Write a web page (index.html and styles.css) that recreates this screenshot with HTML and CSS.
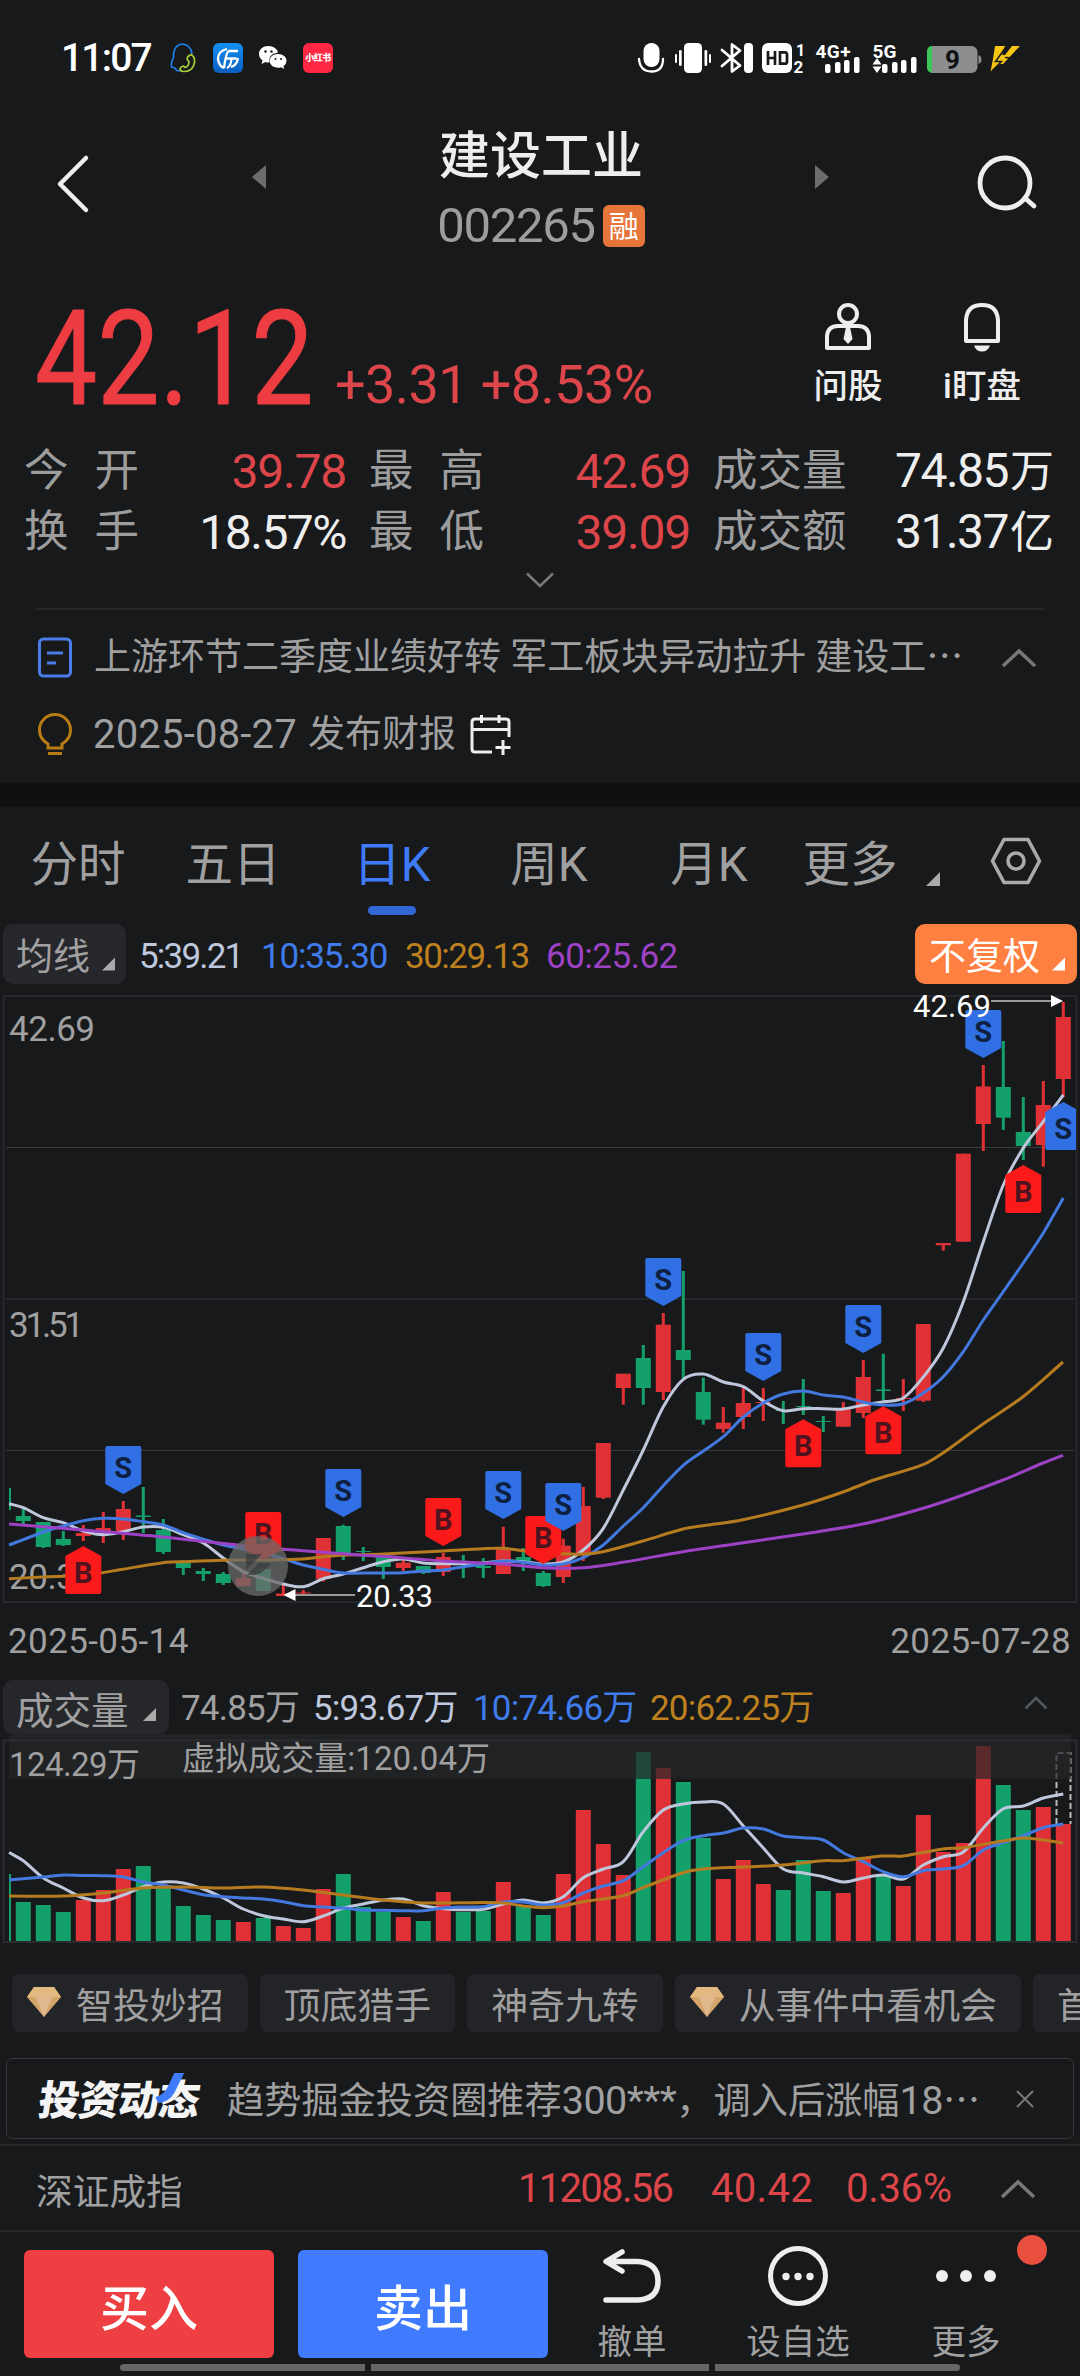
FILE: index.html
```html
<!DOCTYPE html>
<html lang="zh-CN">
<head>
<meta charset="utf-8">
<title>建设工业 002265</title>
<link rel="stylesheet" href="styles.css">
</head>
<body>
<div class="statusbar">
  <span class="clock">11:07</span>
  <svg class="st-qq" width="26" height="30" viewBox="0 0 26 30" fill="none" stroke-width="1.7" stroke-linejoin="round"><path d="M10 28Q6 28 5 25L1.5 24Q1 18 3.500 15Q3 2 12.500 1Q21 2 22 11" stroke="#1d7fe8"/><path d="M21 11.500q5 3 3 10t-10 7q-4 0-4-3q3-4 5-1q4-1 4-6q-3-2-1-5z" stroke="#a7cf35"/></svg>
  <svg class="st-fin" width="30" height="30" viewBox="0 0 30 30"><defs><linearGradient id="finBlue" x2="0" y2="1"><stop stop-color="#1390f5"/><stop offset="1" stop-color="#0a5fc0"/></linearGradient></defs><rect width="30" height="30" rx="6" fill="url(#finBlue)"/><path d="M14 6Q5 8 5 16Q6 23 11 25M11 25Q13 9 16 8H25M13 15.500H23.500M14 25Q18 23 18.500 16M18 24Q24 22 25 15" fill="none" stroke="#fff" stroke-width="2.3"/></svg>
  <svg class="st-wx" width="28" height="25" viewBox="0 0 28 25"><path d="M9.500 0C4 0 0 3.500 0 8q0 4 3.500 6.200L2.500 18l4-2q2 .6 4 .5Q9 8 19 6.500Q17 0 9.500 0z" fill="#fff"/><path d="M19 8c-5 0-8.300 3-8.300 6.800S14 21.700 19 21.700q1.500 0 3-.5l3.200 1.900-.8-2.900Q27.600 18 27.600 14.800C27.600 11 24 8 19 8z" fill="#fff"/><g fill="#17191b"><circle cx="6.500" cy="5.500" r="1.200"/><circle cx="12.500" cy="5.500" r="1.200"/><circle cx="16.500" cy="13" r="1"/><circle cx="22" cy="13" r="1"/></g></svg>
  <span class="st-red">小红书</span>
  <span class="grow"></span>
  <svg class="st-right" width="388" height="34" viewBox="636 41 388 34">
    <g fill="#fff"><rect x="643.500" y="43" width="16" height="24" rx="8"/><path d="M639 59q1 12.500 12.500 12.500T663 59" fill="none" stroke="#fff" stroke-width="2.300" stroke-linecap="round"/>
    <rect x="684" y="43" width="18" height="30" rx="4.500"/><rect x="679" y="50" width="2.700" height="16" rx="1.300"/><rect x="675" y="54" width="2" height="9" rx="1"/><rect x="704.500" y="50" width="2.700" height="16" rx="1.300"/><rect x="709" y="54" width="2" height="9" rx="1"/>
    <path d="M722 50L740 65.500L732 71.500V44.500L740 50.500L722 66" fill="none" stroke="#fff" stroke-width="2.800" stroke-linejoin="round" stroke-linecap="round"/><rect x="744" y="43" width="9" height="30" rx="4"/>
    <rect x="762" y="43" width="30" height="30" rx="6"/></g>
    <path d="M768 51v14M768 58h7M775 51v14M780 52.300h5q2 0 2 2v7.400q0 2-2 2h-5z" fill="none" stroke="#17191b" stroke-width="2.700"/>
    <g fill="#fff" class="st-text"><text x="796" y="56" font-size="16">1</text><text x="793.500" y="73" font-size="17">2</text><text x="815.500" y="57.500" font-size="19" textLength="35">4G+</text><text x="872.500" y="57.500" font-size="19" textLength="24">5G</text>
    <rect x="825" y="64" width="5.500" height="9" rx="2"/><rect x="835" y="62" width="5.500" height="11" rx="2"/><rect x="844" y="60" width="5.500" height="13" rx="2"/><rect x="854" y="57" width="5.500" height="16" rx="2"/>
    <rect x="882" y="64" width="5.500" height="9" rx="2"/><rect x="892" y="62" width="5.500" height="11" rx="2"/><rect x="901" y="60" width="5.500" height="13" rx="2"/><rect x="911" y="57" width="5.500" height="16" rx="2"/>
    <path d="M872.500 64.500l4.500-6.500 4.500 6.500zM872.500 66.500l4.500 6.500 4.500-6.500z"/></g>
    <rect x="927" y="46" width="50.500" height="27" rx="6" fill="#8c8d8f"/><path d="M978.500 55q3 1 3 4.500t-3 4.500z" fill="#8c8d8f"/><path d="M932 46h-1q-4 1-4 6v15q0 5 5 6z" fill="#3dc658"/><text x="945" y="69" font-size="26" class="st-text" fill="#111">9</text>
    <path d="M995 46h10l-3 9h3l7-9h8L1003 64h-3L990.500 71.500L993 59z" fill="#f7c613"/><path d="M1006 47L995.500 61.500h6L992 71M1014 58l-9-.5" stroke="#17191b" stroke-width="1.500" fill="none"/>
  </svg>
</div>

<header class="header">
  <svg class="back" width="40" height="62" viewBox="0 0 40 62"><path d="M34 5L8 31L34 57" fill="none" stroke="#eee" stroke-width="4.500" stroke-linecap="round" stroke-linejoin="round"/></svg>
  <svg class="prev" width="14" height="24" viewBox="0 0 14 24"><path d="M14 0v24L0 12z" fill="#6c6c6d"/></svg>
  <div class="title"><h1>建设工业</h1><div class="code"><span>002265</span><b>融</b></div></div>
  <svg class="next" width="14" height="24" viewBox="0 0 14 24"><path d="M0 0v24l14-12z" fill="#6c6c6d"/></svg>
  <svg class="search" width="64" height="60" viewBox="0 0 64 60" fill="none" stroke="#eee" stroke-width="4.800" stroke-linecap="round"><circle cx="30" cy="29" r="25"/><path d="M50 44l9 8"/></svg>
</header>

<section class="quote">
  <div class="price-row">
    <span class="price">42.12</span>
    <span class="change">+3.31 +8.53%</span>
    <div class="tool ask"><svg width="48" height="50" viewBox="0 0 48 50" fill="none" stroke="#eee" stroke-width="4"><circle cx="24" cy="12" r="9"/><path d="M3 46V34Q4 24 14 24H34Q44 24 45 34V46Z" stroke-linejoin="round"/><path d="M22 25h4l2.500 12-4.500 5-4.500-5z" fill="#eee" stroke="none"/></svg><span>问股</span></div>
    <div class="tool watch"><svg width="40" height="50" viewBox="0 0 40 50"><path d="M4 39V18Q5 3 20 3Q35 3 36 18V39Z" fill="none" stroke="#eee" stroke-width="4" stroke-linejoin="round"/><path d="M12 43.500h16q-2 6-8 6t-8-6z" fill="#eee"/></svg><span>i盯盘</span></div>
  </div>
  <dl class="stats">
    <dt class="wide">今开</dt><dd class="up">39.78</dd><dt class="wide next-col">最高</dt><dd class="up">42.69</dd><dt class="next-col">成交量</dt><dd>74.85<i>万</i></dd>
    <dt class="wide">换手</dt><dd>18.57%</dd><dt class="wide next-col">最低</dt><dd class="up">39.09</dd><dt class="next-col">成交额</dt><dd>31.37<i>亿</i></dd>
  </dl>
  <svg class="expand" width="30" height="18" viewBox="0 0 30 18"><path d="M2 2.500l13 12.500 13-12.500" fill="none" stroke="#77787a" stroke-width="2.500"/></svg>
</section>

<section class="news">
  <div class="news-row">
    <svg width="34" height="42" viewBox="0 0 34 42" fill="none" stroke="#4a7de8" stroke-width="3"><rect x="1.500" y="2" width="31" height="37" rx="4"/><path d="M9 16h16M9 26h9"/></svg>
    <span class="headline">上游环节二季度业绩好转 军工板块异动拉升 建设工<i class="dots">…</i></span>
    <svg class="fold" width="36" height="20" viewBox="0 0 36 20"><path d="M2 18L18 3L34 18" fill="none" stroke="#77787a" stroke-width="3.500"/></svg>
  </div>
  <div class="news-row second">
    <svg width="34" height="44" viewBox="0 0 34 44" fill="none" stroke="#b97c12" stroke-width="3"><path d="M10 35V31Q1.500 26 1.500 17A15.500 15.500 0 0 1 32.500 17Q32.500 26 24 31V35ZM10 40.500h14"/></svg>
    <span class="date">2025-08-27</span><span class="event">发布财报</span>
    <svg class="cal" width="42" height="42" viewBox="0 0 42 42" fill="none" stroke="#eee" stroke-width="3"><path d="M22 38H5Q2 38 2 35V8Q2 5 5 5H36Q39 5 39 8V23M2 15.500H39M11.500 1v8M29 1v8M33 26v15M25.500 33.500h15"/></svg>
  </div>
</section>

<nav class="tabs">
  <span>分时</span><span>五日</span><span class="active">日K</span><span>周K</span><span>月K</span><span>更多</span>
  <svg class="corner" width="14" height="14" viewBox="0 0 14 14"><path d="M14 0v14H0z" fill="#aaa"/></svg>
  <svg class="hex" width="52" height="48" viewBox="0 0 52 48" fill="none" stroke="#aaa" stroke-width="3.600" stroke-linejoin="round"><path d="M14 2.500H38L49.500 24L38 45.500H14L2.500 24Z"/><circle cx="26" cy="24" r="8"/></svg>
</nav>

<div class="ma-row">
  <button class="chip">均线<svg width="13" height="14" viewBox="0 0 14 14"><path d="M14 0v14H0z" fill="#aaa"/></svg></button>
  <span class="m5">5:39.21</span><span class="m10">10:35.30</span><span class="m30">30:29.13</span><span class="m60">60:25.62</span>
  <button class="chip adjust">不复权<svg width="13" height="14" viewBox="0 0 14 14"><path d="M14 0v14H0z" fill="#fff"/></svg></button>
</div>

<svg id="kline" class="kline" width="1080" height="628" viewBox="0 984 1080 628"></svg>
<div class="dates"><span>2025-05-14</span><span>2025-07-28</span></div>

<div class="vol-head">
  <button class="chip">成交量<svg width="13" height="13" viewBox="0 0 14 14"><path d="M14 0v14H0z" fill="#aaa"/></svg></button>
  <span class="v0">74.85万</span><span class="v5">5:93.67万</span><span class="v10">10:74.66万</span><span class="v20">20:62.25万</span>
  <svg class="vfold" width="24" height="14" viewBox="0 0 24 14"><path d="M1.500 12.500L12 2L22.500 12.500" fill="none" stroke="#55585f" stroke-width="2.500"/></svg>
</div>
<svg id="volume" class="volume" width="1080" height="212" viewBox="0 1734 1080 212"></svg>

<div class="tags">
  <span class="tag gem"><svg width="34" height="30" viewBox="0 0 34 30"><path d="M7 0H27L34 10L17 30L0 10Z" fill="#d6a56c"/><path d="M7 0H27L34 10H0Z" fill="#e3b982"/><path d="M9 10h16L17 30z" fill="#dfb98d"/></svg>智投妙招</span>
  <span class="tag">顶底猎手</span><span class="tag">神奇九转</span>
  <span class="tag gem"><svg width="34" height="30" viewBox="0 0 34 30"><path d="M7 0H27L34 10L17 30L0 10Z" fill="#d6a56c"/><path d="M7 0H27L34 10H0Z" fill="#e3b982"/><path d="M9 10h16L17 30z" fill="#dfb98d"/></svg>从事件中看机会</span>
  <span class="tag">首板</span>
</div>

<div class="banner">
  <div class="brand">投资动态<svg width="30" height="48" viewBox="0 0 30 48"><path d="M29 0L19 20Q14 29 3 30L0 24Q9 22 13 13L19 0Z" fill="#3f7bfa"/></svg></div>
  <span class="promo">趋势掘金投资圈推荐<em>300***</em>，调入后涨幅<em>18</em><i class="dots">…</i></span>
  <svg class="close" width="18" height="18" viewBox="0 0 18 18"><path d="M1 1l16 16M17 1L1 17" stroke="#77787a" stroke-width="2"/></svg>
</div>

<div class="index">
  <span class="name">深证成指</span><span class="n1">11208.56</span><span class="n2">40.42</span><span class="n3">0.36%</span>
  <svg width="36" height="20" viewBox="0 0 36 20"><path d="M2 18L18 3L34 18" fill="none" stroke="#77787a" stroke-width="3.500"/></svg>
</div>

<footer class="actions">
  <button class="buy">买入</button><button class="sell">卖出</button>
  <div class="act a1"><svg width="62" height="60" viewBox="0 0 62 60" fill="none" stroke="#eee" stroke-width="5.500" stroke-linecap="round" stroke-linejoin="round"><path d="M21 6L5 15.500L21 25M6 15.500H37Q57 17 57 35T37 54H5"/></svg><span>撤单</span></div>
  <div class="act a2"><svg width="62" height="60" viewBox="0 0 62 60"><circle cx="31" cy="30" r="27.500" fill="none" stroke="#eee" stroke-width="5"/><g fill="#eee"><circle cx="19" cy="30.500" r="3.700"/><circle cx="31" cy="30.500" r="3.700"/><circle cx="43" cy="30.500" r="3.700"/></g></svg><span>设自选</span></div>
  <div class="act a3"><svg width="62" height="60" viewBox="0 0 62 60" fill="#eee"><circle cx="7" cy="30" r="6"/><circle cx="31" cy="30" r="6"/><circle cx="55" cy="30" r="6"/></svg><span>更多</span><i class="badge"></i></div>
  <div class="homebar"><i></i><i></i><i></i></div>
</footer>
<script src="chart.js"></script>
</body>
</html>
```
FILE: styles.css
```css
* { box-sizing: border-box; }
body { margin: 0; width: 1080px; height: 2376px; overflow: hidden; background: #17191b; color: #eee; font-family: Roboto, "Noto Sans CJK SC", sans-serif; }
h1, dl, dd, dt { margin: 0; font-weight: 400; }
button { border: 0; padding: 0; color: inherit; font: inherit; }
i, em { font-style: normal; }
svg { display: block; flex: none; }
span { white-space: nowrap; }
.grow { flex: 1; }

.statusbar { height: 116px; display: flex; align-items: center; padding: 0 56px 0 61px; }
.clock { width: 109px; font-size: 39px; font-weight: 500; letter-spacing: -1.8px; color: #fff; }
.st-fin { margin-left: 17px; }
.st-wx { margin-left: 16px; }
.st-red { margin-left: 16px; width: 30px; height: 30px; border-radius: 6px; background: #ff2741; color: #fff; font-size: 9px; font-weight: 900; line-height: 30px; text-align: center; letter-spacing: -.5px; }
.st-text { font-weight: 700; font-family: Roboto, sans-serif; }

.header { height: 150px; display: flex; align-items: flex-start; }
.back { margin: 37px 0 0 52px; }
.prev { margin: 49px 0 0 160px; }
.title { width: 300px; margin: 0 124px 0 125px; display: flex; flex-direction: column; align-items: center; }
.title h1 { height: 78px; line-height: 82px; font-size: 51px; font-weight: 500; }
.code { display: flex; align-items: center; gap: 8px; height: 66px; margin-top: -1px; }
.code span { font-size: 49px; letter-spacing: -1.3px; color: #9d9d9e; line-height: 66px; }
.code b { width: 42px; height: 42px; border-radius: 6px; background: #e6753c; color: #fff; font-size: 30px; line-height: 43px; text-align: center; font-weight: 400; }
.next { margin-top: 49px; }
.search { margin: 38px 0 0 146px; }

.quote { height: 342px; }
.price-row { height: 156px; display: flex; align-items: flex-start; padding-left: 35px; }
.price { width: 300px; height: 156px; font-size: 132px; line-height: 186px; color: #ed3d42; font-weight: 400; -webkit-text-stroke: 1px #ed3d42; transform: scaleX(.84); transform-origin: 0 0; letter-spacing: 0; }
.change { width: 460px; font-size: 54px; line-height: 60px; margin-top: 89px; color: #dc4549; letter-spacing: -.6px; }
.tool { display: flex; flex-direction: column; align-items: center; width: 100px; margin-top: 36px; font-size: 34.500px; font-weight: 500; line-height: 40px; }
.tool span { margin-top: 14px; }
.ask { margin-left: 3px; }
.watch { margin-left: 34px; }
.stats { display: grid; grid-template-columns: 138px 184px 159px 185px 160px 204px; padding: 19px 0 0 24px; grid-auto-rows: 61px; font-size: 44.500px; line-height: 61px; align-items: center; height: 141px; }
.stats dt { color: #9d9d9e; white-space: nowrap; }
.stats .next-col { padding-left: 23px; }
.wide { letter-spacing: 26px; }
.stats dd { text-align: right; font-size: 48px; letter-spacing: -1.500px; white-space: nowrap; }
.stats dd.up { letter-spacing: -1.200px; }
.stats dd i { font-size: 44px; letter-spacing: 0; margin-left: 2px; }
.up { color: #dc4549; }
.expand { margin: 8px 0 0 525px; }

.news { height: 199px; border-bottom: 24px solid #0f1011; padding: 10px 35px 0; color: #a0a0a1; font-size: 37px; }
.news::before { content: ""; display: block; height: 2px; margin-top: -10px; background: #242628; }
.news-row { display: flex; align-items: center; height: 78px; margin-top: 9px; padding-left: 3px; line-height: 50px; }
.news-row.second { margin-top: -1px; }
.headline { margin-left: 22px; width: 871px; }
.dots { font-family: "Noto Sans CJK SC", sans-serif; line-height: 1px; }
.fold { margin-left: 36px; }
.date { margin-left: 21px; font-size: 40px; width: 215px; letter-spacing: .2px; }
.cal { margin-left: 14px; }

.tabs { height: 117px; display: grid; grid-template-columns: 156px 154px 164px 150px 170px 112px 84px 1fr; font-size: 47.500px; line-height: 58px; padding-top: 29px; text-align: center; color: #a0a0a1; }
.active { color: #3f7bfa; }
.active::after { content: ""; display: block; width: 48px; height: 9px; margin: 12px auto 0; border-radius: 4.500px; background: #3069d6; }
.corner { margin: 36px 0 0 20px; }
.hex { margin-top: 1px; }

.chip { display: flex; align-items: center; height: 60px; border-radius: 10px; background: #26272b; color: #a0a0a1; font-size: 37px; }
.ma-row { height: 60px; display: flex; align-items: center; padding: 0 3px; font-size: 35px; letter-spacing: -.5px; }
.ma-row > span { padding-top: 4px; }
.ma-row .chip { width: 123px; padding-left: 13px; gap: 12px; letter-spacing: 0; }
.ma-row .chip svg { margin-top: 20px; }
.ma-row .adjust { width: 162px; margin-left: auto; padding-left: 14px; background: #ff8040; color: #fff; }
.m5 { width: 122px; margin-left: 13px; letter-spacing: -1.800px; color: #bfc7dc; }
.m10 { width: 144px; letter-spacing: -1.200px; color: #3f7bea; }
.m30 { width: 141px; letter-spacing: -1.500px; color: #bd801e; }
.m60 { color: #9d42c4; }

.dates { height: 58px; display: flex; justify-content: space-between; align-items: center; padding: 0 9px 0 8px; font-size: 35px; letter-spacing: .4px; color: #a0a0a1; }

.vol-head { height: 64px; display: flex; align-items: center; padding: 0 3px; font-size: 35px; }
.vol-head .chip { width: 166px; height: 54px; margin-top: 10px; padding-left: 13px; gap: 14px; font-size: 37.500px; }
.vol-head .chip svg { margin-top: 14px; }
.vol-head > span { margin-top: 5px; letter-spacing: -.8px; }
.v0 { width: 132px; margin-left: 12px; color: #a0a0a1; }
.v5 { width: 160px; color: #bfc7dc; }
.v10 { width: 177px; color: #3f7bea; }
.v20 { width: 374px; color: #bd801e; }
.vfold { margin-top: 2px; }

.kline text, .volume text { font-family: Roboto, "Noto Sans CJK SC", sans-serif; }
.axis { fill: #a0a0a1; font-size: 35px; }
.vaxis { fill: #a0a0a1; font-size: 33px; }
.callout { fill: #fff; font-size: 31px; }
.flag { font-size: 29px; font-weight: 700; text-anchor: middle; }
.line { fill: none; stroke-width: 3; stroke-linejoin: round; }

.tags { display: flex; gap: 12px; margin: 28px 0 0 12px; height: 58px; overflow: hidden; }
.tag { flex: none; display: flex; align-items: center; height: 58px; padding: 0 24px; border-radius: 7px; background: #232427; color: #a0a0a1; font-size: 36.900px; }
.gem { padding-left: 15px; gap: 15px; }
.gem svg { margin-top: -2px; }

.banner { display: flex; align-items: center; height: 81px; margin: 26px 6px 0; border: 1.500px solid #38393c; border-radius: 6px; color: #a0a0a1; font-size: 37.200px; padding-left: 30px; }
.brand { position: relative; width: 164px; font-size: 41px; font-weight: 900; letter-spacing: -1px; color: #f4f4f4; white-space: nowrap; transform: skewX(-8deg); padding: 0 0 3px 2px; }
.brand svg { position: absolute; left: 118px; top: 6px; transform: skewX(8deg); }
.promo { margin-left: 26px; width: 750px; padding-bottom: 2px; }
.promo em { font-size: 39.500px; letter-spacing: -.5px; }
.close { margin-left: 39px; }

.index { display: flex; align-items: center; height: 88px; margin-top: 5px; padding: 1px 0 0 36px; border-top: 2px solid #242628; border-bottom: 2px solid #242628; font-size: 40px; letter-spacing: -.300px; color: #dc4549; }
.index .name { width: 482px; font-size: 36.700px; letter-spacing: 0; color: #a0a0a1; }
.n1 { width: 193px; letter-spacing: -1.700px; }
.n2 { width: 135px; letter-spacing: .3px; }
.n3 { width: 154px; }

.actions { display: flex; align-items: flex-start; flex-wrap: wrap; padding: 18px 0 0 24px; height: 144px; }
.actions button { width: 250px; height: 108px; border-radius: 6px; background: #ee3f43; color: #fff; font-size: 49px; font-weight: 500; }
.actions .sell { background: #3f7aff; margin-left: 24px; }
.act { position: relative; width: 110px; display: flex; flex-direction: column; align-items: center; font-size: 34.500px; line-height: 40px; color: #a0a0a1; margin-top: -4px; }
.act span { margin-top: 16px; }
.a1 { margin-left: 29px; }
.a2 { margin-left: 56px; }
.a3 { margin-left: 58px; }
.badge { position: absolute; left: 106px; top: -11px; width: 30px; height: 30px; border-radius: 50%; background: #e84f3f; }
.homebar { display: grid; grid-template-columns: 245px 338px 245px; gap: 6px; margin: -4px 0 0 96px; height: 7px; }
.homebar i { background: #666; }
.homebar i:first-child { border-radius: 4px 0 0 4px; }
.homebar i:last-child { border-radius: 0 4px 4px 0; }
```
FILE: chart.js
```js
const RED = '#e03236', GREEN = '#14a06b';
const X0 = 23.3, STEP = 20, BODY = 15;
const px = i => X0 + i * STEP;

// direction, body top, body bottom, wick top, wick bottom
const candles = [
  ['g',1516,1521,1509,1524],['g',1522,1547,1522,1548],['g',1539,1545,1531,1546],['r',1533,1536,1525,1541],
  ['r',1528,1531,1512,1543],['r',1509,1531,1501,1540],['g',1515.5,1517,1487,1533],['g',1530,1552,1519,1554],
  ['g',1563,1568,1560,1575],['g',1571,1574,1568,1581],['g',1574,1583,1572,1585],['r',1578,1586,1573,1586],
  ['g',1569,1591,1568,1591],['r',1593.5,1596,1583,1596],['r',1592.5,1593.5,1590,1595],['r',1538,1579,1538,1581.5],
  ['g',1526,1553.5,1524.7,1560],['g',1551,1552,1547,1561],['g',1555,1567,1553,1579],['r',1562.7,1568,1557,1571],
  ['g',1566,1573,1566,1574],['r',1557,1572,1553,1576],['g',1563.5,1564.5,1555,1578],['g',1566,1568,1558,1578],
  ['r',1549,1574,1526.7,1574],['g',1557,1561,1548,1571],['g',1573,1586,1571,1587],['r',1545.7,1577,1538.7,1583],
  ['r',1506,1554,1487,1561],['r',1443,1497.7,1443,1499],['r',1373.7,1388,1373.7,1404.7],['g',1358,1388,1345,1404.7],
  ['r',1324.7,1392,1313,1400],['g',1350,1360,1271,1378],['g',1392,1419.7,1377.7,1424.7],['r',1422.7,1429,1407,1432.7],
  ['r',1403,1417,1388,1429],['r',1402,1403,1388,1421],['g',1410,1411,1401,1424],['g',1406,1407,1379,1415],
  ['g',1421,1422,1416,1432],['r',1409,1426.7,1402,1426.7],['r',1377,1413,1360,1418],['g',1389.5,1391,1353.7,1400],
  ['r',1398,1399,1379,1411],['r',1324,1400.7,1324,1402],['r',1243,1245.3,1243,1250.7],['r',1153.7,1241.7,1153.7,1241.7],
  ['r',1086.5,1124,1065,1151],['g',1087,1117.7,1041,1130],['g',1132,1146,1097,1160],['r',1105,1145,1081,1166.7],
  ['r',1017,1079,1002,1097]
];
const volTops = [1902,1905,1912,1900,1890,1869,1866,1888,1906,1915,1920,1922,1918,1926,1928,1889,1874,1907,1911.7,1917,1921,1892,1912,1911,1882,1906,1915,1874,1810,1844,1875,1752,1768,1782,1838,1879,1860,1884,1890,1860,1891,1893,1859,1876,1886,1815,1852,1843,1746,1785,1810,1807,1824];

const byIndex = (first, ys) => [[9, first], ...ys.map((y, i) => [px(i), y])];
const ma5 = byIndex(1503.7, [1507.7,1517.7,1522.7,1531,1534.7,1531.7,1527,1527.3,1534.7,1543,1558,1571.7,1578.3,1584,1586.7,1578.7,1574,1567.7,1561.7,1559,1563,1563.7,1563.7,1563,1561,1561.7,1564,1562,1550,1528.3,1490,1450,1406.7,1379.3,1374,1382,1386.7,1401,1410.7,1408.7,1408.7,1409,1405,1401.7,1398,1377,1348,1301.7,1241.7,1185,1148,1121.7,1095]);
const ma10 = byIndex(1545, [1539.7,1532,1526,1520.7,1518.3,1519,1521.7,1525,1532.7,1539.3,1545,1549,1553.3,1558.7,1565,1569.3,1573,1573,1573,1572.7,1571,1570,1566.7,1564,1561,1562.3,1565,1564,1557.7,1545,1526,1507.7,1485.7,1465.3,1451,1436.7,1417,1403,1394,1391,1395,1397,1402,1405,1403.7,1393,1376.7,1351.7,1320,1291.7,1263,1233,1198]);
const ma30 = [[9,1578.7],[43,1577],[83,1575.3],[123,1569.3],[163,1562.7],[183,1561.7],[223,1560.3],[263,1560],[303,1559],[323,1556.7],[343,1555.3],[383,1554],[443,1551],[483,1548.7],[503,1548.3],[523,1550.7],[563,1553.7],[583,1554],[603,1551.7],[643,1541],[683,1529],[703,1525.7],[743,1519.7],[803,1505],[843,1492],[874,1480],[923,1464.7],[943,1453],[983,1424],[1023,1396.7],[1063,1362]];
const ma60 = [[9,1524],[83,1530],[163,1537],[243,1545.7],[303,1550.7],[360,1555],[383,1556.3],[443,1561],[503,1564],[543,1567.7],[583,1567.7],[623,1562.3],[683,1551.7],[740,1543.3],[803,1534],[863,1524],[903,1514],[943,1502],[1003,1480],[1043,1463],[1063,1455.3]];
const v5 = byIndex(1852.5, [1860.7,1878,1888,1898,1900.7,1895,1886.7,1882,1883,1889,1898,1909,1915.7,1919,1921.7,1916,1908,1904,1900,1899,1905.7,1908.7,1909.7,1909.3,1904,1900,1903,1896.7,1877.7,1869,1861.7,1831.7,1810,1804,1802,1804,1826,1848,1869,1873,1876.7,1882,1878,1875,1879,1865,1856.7,1852,1828,1808.7,1806,1798,1794]);
const v10 = byIndex(1880, [1878.7,1877,1875,1875.5,1875.7,1877,1882,1885,1890,1894.7,1896.7,1898,1899,1901.7,1905.7,1907,1908,1910,1910.3,1910.7,1910.7,1908,1907,1906.7,1902,1902,1905,1902.7,1893,1886,1880.7,1866.7,1852.7,1840.7,1835.7,1833,1828,1829,1836,1837.7,1840,1852.7,1861.7,1871.7,1876.7,1870.7,1869,1865.7,1850,1842.7,1835.7,1827.7,1824]);
const v20 = [[9,1896],[63,1896],[103,1893],[143,1888],[183,1887],[223,1888],[263,1887],[303,1890],[343,1895],[383,1900],[423,1903],[463,1902.7],[503,1903],[523,1906],[543,1907.7],[563,1906],[583,1901.7],[623,1895.7],[643,1887.7],[683,1872.7],[703,1869],[743,1867],[783,1865],[823,1860.7],[843,1860.7],[883,1856],[903,1856],[943,1849],[963,1847.7],[1003,1841],[1023,1838],[1043,1840],[1063,1843]];

const rect = (x, y, w, h, fill) => `<rect x="${x}" y="${y}" width="${w}" height="${h}" fill="${fill}"/>`;

// Smooth curve whose tangent at each point follows its neighbours
function curve(pts, color) {
  let d = `M${pts[0]}`;
  const slope = i => {
    const a = pts[Math.max(i - 1, 0)], b = pts[Math.min(i + 1, pts.length - 1)];
    return (b[1] - a[1]) / (b[0] - a[0]);
  };
  for (let i = 1; i < pts.length; i++) {
    const [x1, y1] = pts[i - 1], [x2, y2] = pts[i], h = (x2 - x1) / 3;
    d += `C${x1 + h} ${y1 + h * slope(i - 1)} ${x2 - h} ${y2 - h * slope(i)} ${x2} ${y2}`;
  }
  return `<path class="line" d="${d}" stroke="${color}"/>`;
}

function flag(letter, x, y, up) {
  const fill = letter === 'S' ? '#316fe4' : '#fb1a1a';
  const ink = letter === 'S' ? '#0e2040' : '#4d1420';
  const d = up
    ? `M${x} ${y}L${x + 18} ${y + 10}V${y + 46}Q${x + 18} ${y + 48} ${x + 16} ${y + 48}H${x - 16}Q${x - 18} ${y + 48} ${x - 18} ${y + 46}V${y + 10}Z`
    : `M${x - 18} ${y + 2}Q${x - 18} ${y} ${x - 16} ${y}H${x + 16}Q${x + 18} ${y} ${x + 18} ${y + 2}V${y + 38}L${x} ${y + 48}L${x - 18} ${y + 38}Z`;
  return `<path d="${d}" fill="${fill}"/><text class="flag" x="${x}" y="${y + (up ? 37 : 31.5)}" fill="${ink}">${letter}</text>`;
}

let k = '<clipPath id="plot"><rect x="0" y="984" width="1076" height="628"/></clipPath>';
k += '<rect x="3.500" y="996" width="1073" height="606" fill="none" stroke="#26282b" stroke-width="2"/>';
k += rect(6, 1147, 1068, 1, '#37393b') + rect(6, 1298, 1068, 2, '#26282b') + rect(6, 1450, 1068, 1, '#37393b');
k += '<text class="axis" x="9" y="1041" textLength="86">42.69</text><text class="axis" x="9" y="1337" textLength="75">31.51</text><text class="axis" x="9" y="1589" textLength="86">20.33</text>';
k += rect(9, 1488, 2, 22, GREEN);
candles.forEach(([dir, t, b, wt, wb], i) => {
  const c = dir === 'r' ? RED : GREEN, x = px(i);
  k += rect(x - 1.5, wt, 3, wb - wt, c) + rect(x - BODY / 2, t, BODY, b - t, c);
});
k += curve(ma5, '#bfc7dc') + curve(ma10, '#4379de') + curve(ma30, '#b67b1f') + curve(ma60, '#9d42c4');
k += '<g clip-path="url(#plot)">';
[['B',3,1546,1],['S',5,1446],['B',12,1512],['S',16,1469],['B',21,1498],['S',24,1471],['B',26,1516],['S',27,1483],
 ['S',32,1258],['S',37,1333],['B',39,1419.3,1],['S',42,1305],['B',43,1406.3,1],['S',48,1010],['B',50,1165,1],['S',52,1102,1]]
  .forEach(([l, i, y, up]) => { k += flag(l, px(i), y, up); });
k += '</g>';
k += '<circle cx="258" cy="1566" r="30" fill="#6b6b6b" fill-opacity=".75"/><path d="M246 1554h16l-16 16zM271 1563l-12 0-12 12h8q8-1 16-12z" fill="#3b3d3e" fill-opacity=".75"/>';
k += '<path d="M293 1595H355M991 1001H1052" stroke="#999" stroke-width="2"/><path d="M283.500 1595l12-6v12zM1063 1001l-12-6v12z" fill="#fff"/>';
k += '<text class="callout" x="356" y="1606.500" textLength="77">20.33</text><text class="callout" x="913" y="1017" textLength="78">42.69</text>';
document.getElementById('kline').innerHTML = k;

let v = rect(9, 1874, 2, 67, GREEN);
volTops.forEach((t, i) => { v += rect(px(i) - BODY / 2, t, BODY, 1941 - t, candles[i][0] === 'r' ? RED : GREEN); });
v += '<path d="M1056.500 1824V1753H1070.500V1824" fill="none" stroke="#bbb" stroke-width="2" stroke-dasharray="6 3"/>';
v += '<rect x="9" y="1734" width="1062" height="45" fill="#242528" fill-opacity=".72"/>';
v += '<rect x="3.500" y="1740.500" width="1073" height="201.500" fill="none" stroke="#2a2c2f" stroke-width="2"/>';
v += curve(v5, '#bfc7dc') + curve(v10, '#4379de') + curve(v20, '#b67b1f');
v += '<text class="vaxis" x="9" y="1776" textLength="131">124.29万</text><text class="vaxis" x="182" y="1770" textLength="308">虚拟成交量:120.04万</text>';
document.getElementById('volume').innerHTML = v;
```
